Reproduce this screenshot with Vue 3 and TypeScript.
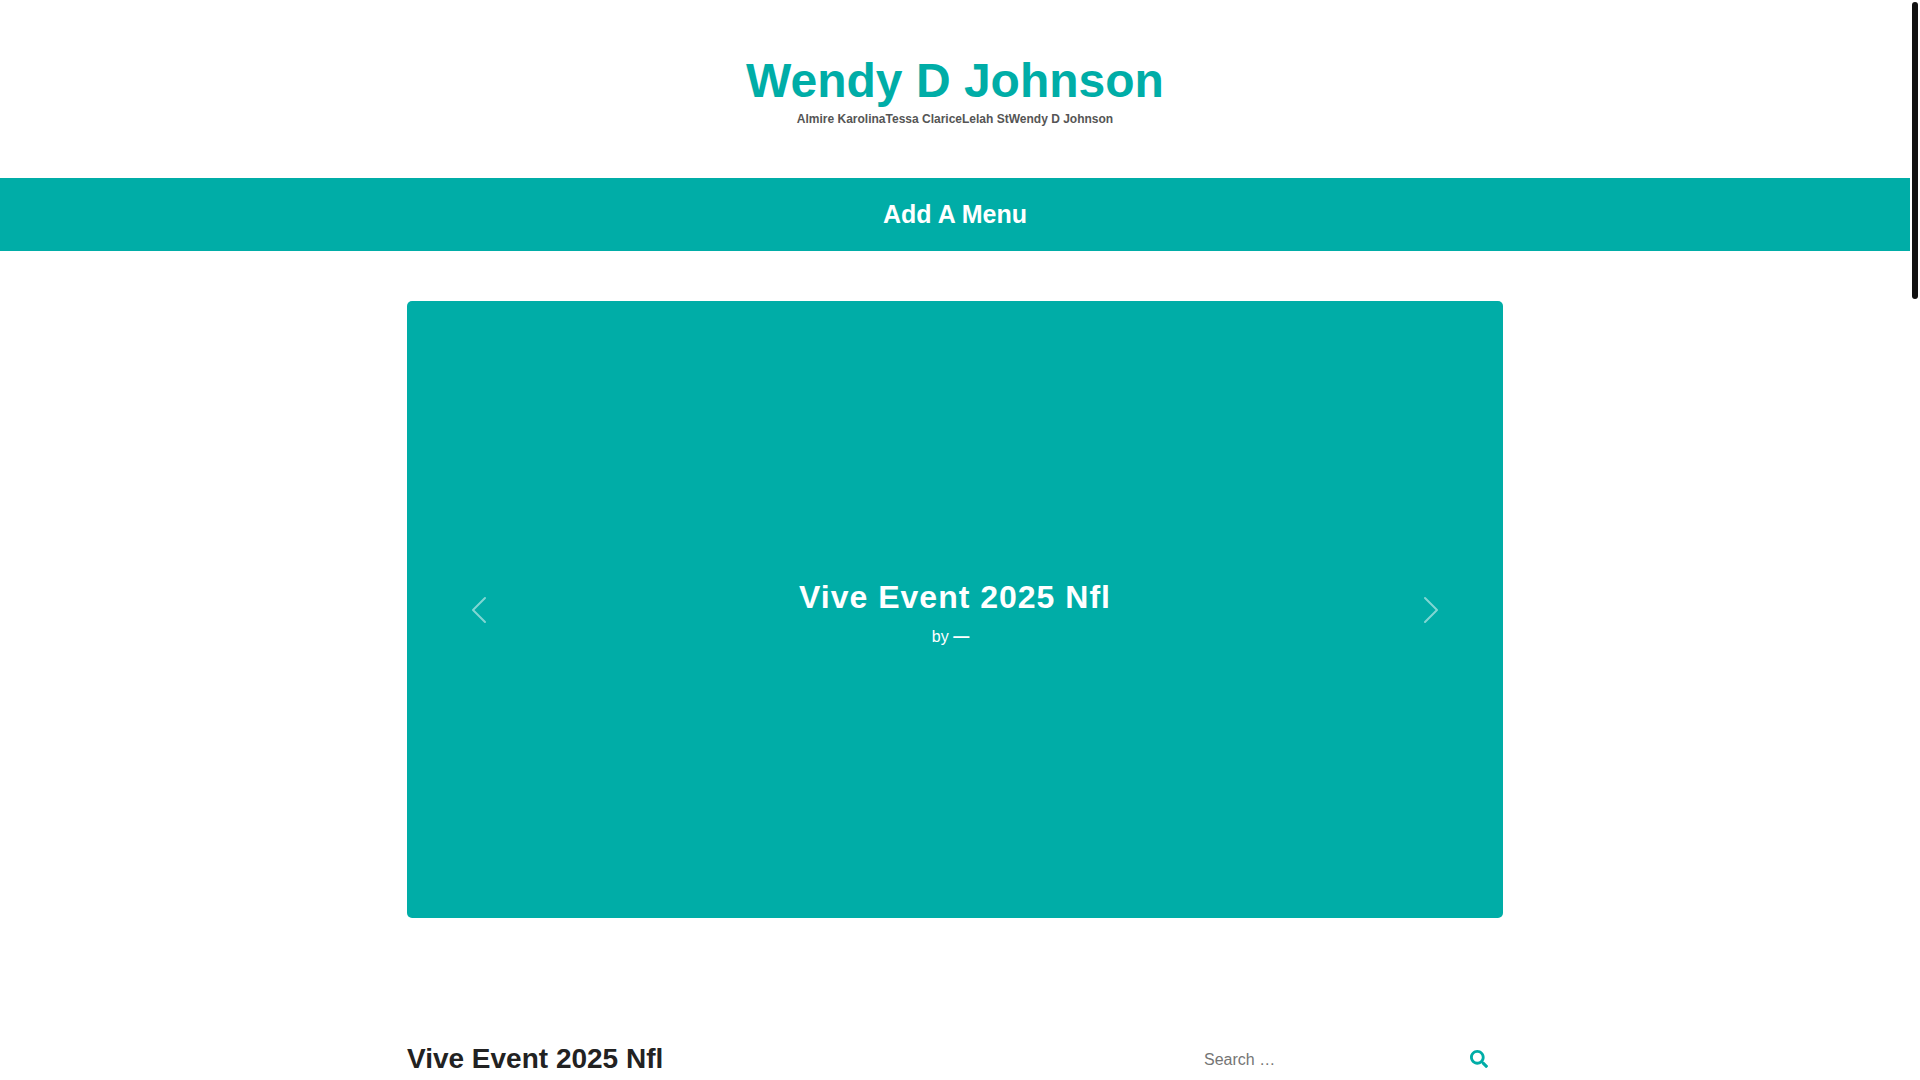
<script setup lang="ts">
import { ref } from 'vue'

interface Slide {
  title: string
  author: string
}

const siteTitle = 'Wendy D Johnson'
const tagline = 'Almire KarolinaTessa ClariceLelah StWendy D Johnson'
const slides: Slide[] = [{ title: 'Vive Event 2025 Nfl', author: '—' }]
const current = ref(0)
const query = ref('')

function move(step: number): void {
  current.value = (current.value + step + slides.length) % slides.length
}
</script>

<template>
  <div class="page">
    <header class="masthead">
      <h1 class="site-title"><a href="#">{{ siteTitle }}</a></h1>
      <p class="tagline">{{ tagline }}</p>
    </header>

    <nav class="menu">
      <a href="#" class="menu-link">Add A Menu</a>
    </nav>

    <section class="slider container">
      <button type="button" class="arrow" aria-label="Previous" @click="move(-1)">
        <svg viewBox="0 0 16 16" width="32" height="32" fill="#fff">
          <path d="M11.354 1.646a.5.5 0 0 1 0 .708L5.707 8l5.647 5.646a.5.5 0 0 1-.708.708l-6-6a.5.5 0 0 1 0-.708l6-6a.5.5 0 0 1 .708 0z" />
        </svg>
      </button>
      <div class="caption">
        <h2 class="slide-title">{{ slides[current].title }}</h2>
        <p class="byline">by <strong>{{ slides[current].author }}</strong></p>
      </div>
      <button type="button" class="arrow" aria-label="Next" @click="move(1)">
        <svg viewBox="0 0 16 16" width="32" height="32" fill="#fff">
          <path d="M4.646 1.646a.5.5 0 0 1 .708 0l6 6a.5.5 0 0 1 0 .708l-6 6a.5.5 0 0 1-.708-.708L10.293 8 4.646 2.354a.5.5 0 0 1 0-.708z" />
        </svg>
      </button>
    </section>

    <main class="content container">
      <h2 class="post-title">Vive Event 2025 Nfl</h2>
      <form class="search" role="search" @submit.prevent>
        <input v-model="query" type="search" class="search-field" placeholder="Search …" aria-label="Search" />
        <button type="submit" class="search-button" aria-label="Search">
          <svg viewBox="0 0 512 512" width="18" height="18" fill="currentColor">
            <path d="M505 442.700 405.300 343c-4.500-4.500-10.600-7-17-7H372c27.600-35.300 44-79.700 44-128C416 93.100 322.900 0 208 0S0 93.100 0 208s93.100 208 208 208c48.300 0 92.700-16.400 128-44v16.300c0 6.400 2.500 12.500 7 17l99.700 99.700c9.400 9.400 24.600 9.400 33.900 0l28.300-28.300c9.400-9.400 9.400-24.600.1-34zM208 336c-70.700 0-128-57.200-128-128 0-70.700 57.200-128 128-128 70.700 0 128 57.200 128 128 0 70.700-57.200 128-128 128z" />
          </svg>
        </button>
      </form>
    </main>

    <div class="scroll-thumb" aria-hidden="true"></div>
  </div>
</template>

<style>
body {
  margin: 0;
  background: #fff;
  overflow: hidden;
}
</style>

<style scoped>
.page {
  position: relative;
  height: 100vh;
  overflow: hidden;
  padding-right: 10px;
  box-sizing: border-box;
  font-family: Arial, "Liberation Sans", sans-serif;
  text-rendering: optimizeSpeed;
  font-size: 16px;
  color: #222;
}

.masthead {
  padding: 52px 0 50px;
  text-align: center;
}

.site-title {
  margin: 0;
  font-size: 48px;
  line-height: 58px;
}

.site-title a {
  color: #00ada7;
  text-decoration: none;
}

.tagline {
  margin: 0;
  font-size: 12px;
  line-height: 18px;
  font-weight: bold;
  color: #555;
}

.menu {
  display: flex;
  justify-content: center;
  padding: 16px 0;
  background: #00ada7;
}

.menu-link {
  color: #fff;
  font-size: 25px;
  line-height: 41px;
  font-weight: bold;
  text-decoration: none;
}

.container {
  width: calc(100% - 48px);
  max-width: 1096px;
  margin: 0 auto;
}

.slider {
  display: flex;
  align-items: center;
  justify-content: space-between;
  box-sizing: border-box;
  min-height: 617px;
  margin-top: 50px;
  padding: 0 56px;
  border-radius: 5px;
  background: #00ada7;
}

.arrow {
  display: flex;
  padding: 0;
  border: 0;
  background: none;
  opacity: 0.5;
  cursor: pointer;
}

.caption {
  padding-top: 8px;
  text-align: center;
  color: #fff;
}

.slide-title {
  margin: 0 0 8px;
  font-size: 32px;
  line-height: 38px;
  letter-spacing: 1px;
}

.byline {
  margin: 0;
  padding-right: 9px;
  line-height: 26px;
}

.content {
  display: flex;
  align-items: center;
  justify-content: space-between;
  margin-top: 120px;
}

.post-title {
  margin: 0;
  font-size: 28px;
  line-height: 42px;
}

.search {
  display: flex;
  align-items: center;
  justify-content: space-between;
  width: 300px;
}

.search-field {
  flex: 1;
  min-width: 0;
  padding: 1px 0 0 1px;
  border: 0;
  outline: 0;
  background: none;
  font: inherit;
  line-height: 24px;
  color: #222;
}

.search-field::placeholder {
  color: #757575;
}

.search-button {
  display: flex;
  padding: 0 15px;
  border: 0;
  background: none;
  color: #00ada7;
  cursor: pointer;
}

.scroll-thumb {
  position: absolute;
  top: 2px;
  right: 2px;
  width: 6px;
  height: 297px;
  border-radius: 3px;
  background: #111;
}
</style>
